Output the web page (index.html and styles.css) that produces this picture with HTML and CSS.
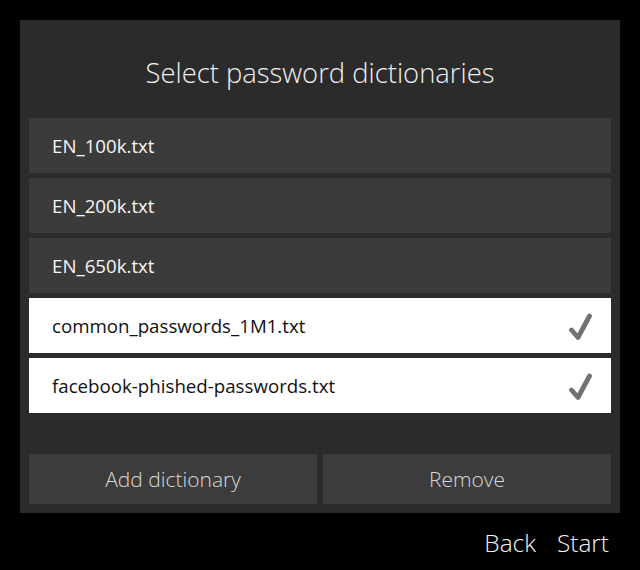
FILE: index.html
```html
<!DOCTYPE html>
<html lang="en">
<head>
    <meta charset="UTF-8">
    <meta name="viewport" content="width=device-width, initial-scale=1.0">
    <title>Select password dictionaries</title>
    <link rel="stylesheet" href="styles.css">
</head>
<body>
    <div class="panel">
        <h1 class="title">Select password dictionaries</h1>

        <ul class="dict-list">
            <li class="dict">EN_100k.txt</li>
            <li class="dict">EN_200k.txt</li>
            <li class="dict">EN_650k.txt</li>
            <li class="dict selected">
                common_passwords_1M1.txt
                <svg class="check" width="24" height="28" viewBox="0 0 24 28">
                    <path d="M2.5 18 L9 25.5 L20.5 4" />
                </svg>
            </li>
            <li class="dict selected">
                facebook-phished-passwords.txt
                <svg class="check" width="24" height="28" viewBox="0 0 24 28">
                    <path d="M2.5 18 L9 25.5 L20.5 4" />
                </svg>
            </li>
        </ul>

        <div class="actions">
            <button class="btn">Add dictionary</button>
            <button class="btn">Remove</button>
        </div>
    </div>

    <!-- navegacion -->
    <div class="nav">
        <a class="nav-link">Back</a>
        <a class="nav-link">Start</a>
    </div>
</body>
</html>
```

FILE: styles.css
```css
body {
    margin: 0;
    width: 640px;
    height: 570px;
    background: #000;
    font-family: "Open Sans", "Noto Sans", sans-serif;
    overflow: hidden;
}
.panel {
    margin: 20px 20px 0;
    height: 493px;
    box-sizing: border-box;
    padding: 0 9px 9px;
    background: #2b2b2b;
    display: flex;
    flex-direction: column;
}
.title {
    margin: 0;
    height: 98px;
    box-sizing: border-box;
    padding-top: 34px;
    text-align: center;
    font-size: 27.4px;
    font-weight: 300;
    line-height: 38px;
    color: #f0f0f0;
}
.dict-list {
    list-style: none;
    margin: 0;
    padding: 0;
    display: flex;
    flex-direction: column;
    gap: 5px;
}
.dict {
    height: 55px;
    display: flex;
    align-items: center;
    justify-content: space-between;
    padding: 0 18px 0 23px;
    background: #3b3b3b;
    color: #f6f6f6;
    font-size: 18.7px;
}
.dict.selected {
    background: #fff;
    color: #111;
}
.check {
    fill: none;
    stroke: #727272;
    stroke-width: 4.8;
    stroke-linecap: round;
    stroke-linejoin: round;
}
.actions {
    margin-top: auto;
    display: flex;
    gap: 6px;
}
.btn {
    flex: 1;
    height: 50px;
    border: none;
    background: #3c3c3c;
    color: #d8d8d8;
    font-family: inherit;
    font-size: 21px;
    font-weight: 300;
    padding: 0;
}
.nav {
    display: flex;
    justify-content: flex-end;
    gap: 21px;
    padding: 12px 31px 0 0;
}
.nav-link {
    color: #f2f2f2;
    font-size: 24.4px;
    font-weight: 300;
    line-height: 36px;
}
```
